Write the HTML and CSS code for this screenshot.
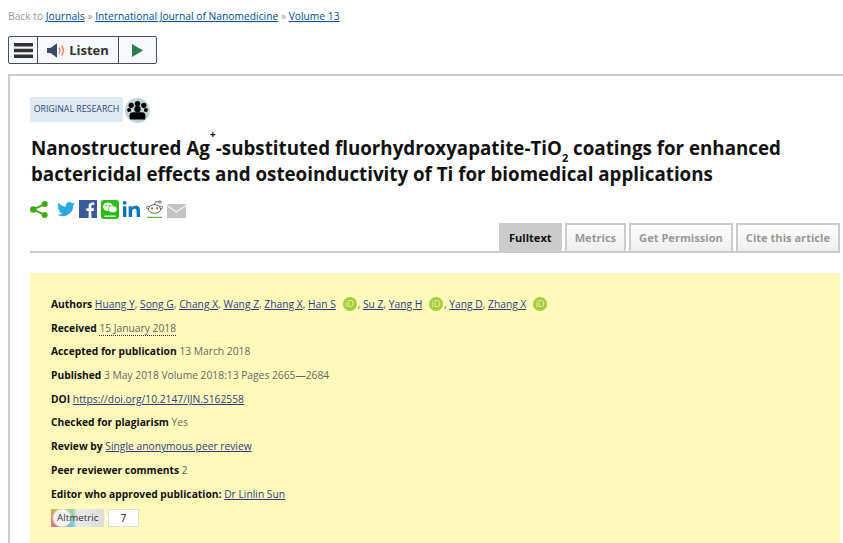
FILE: index.html
```html
<!DOCTYPE html>
<html lang="en">
<head>
<meta charset="utf-8">
<title>Nanostructured Ag+-substituted fluorhydroxyapatite-TiO2 coatings</title>
<link rel="stylesheet" href="styles.css">
</head>
<body>
<nav class="crumbs">Back to <a href="#">Journals</a> » <a href="#">International Journal of Nanomedicine</a> » <a href="#">Volume 13</a></nav>
<div class="player">
  <span class="pl-cell pl-menu"><svg width="19" height="15" viewBox="0 0 19 15"><path fill="#333" d="M0 0h19v3.600H0zM0 5.700h19v3.600H0zM0 11.400h19V15H0z"/></svg></span>
  <span class="pl-cell pl-listen"><svg width="18" height="15" viewBox="0 0 18 15"><path fill="#3c4a6b" d="M0 5h3.500L10 .3v14.400L3.500 10H0z"/><path fill="none" stroke="#e8734e" stroke-width="1.200" d="M12 4.500c1.300 1.800 1.300 4.200 0 6M14.500 2.500c2.300 3 2.300 7 0 10"/></svg><b>Listen</b></span>
  <span class="pl-cell pl-play"><svg width="12" height="13" viewBox="0 0 12 13"><path fill="#2a7d4f" d="M0 0l11 6.500L0 13z"/></svg></span>
</div>
<main class="article">
  <div class="tag-row">
    <span class="tag">ORIGINAL RESEARCH</span>
    <span class="peer"><svg width="21" height="19" viewBox="0 0 20 18"><g fill="#000"><circle cx="4" cy="4" r="2.500"/><circle cx="10" cy="2.600" r="2.600"/><circle cx="16" cy="4" r="2.500"/><circle cx="10" cy="7.700" r="3"/><circle cx="2" cy="8.500" r="1.900"/><circle cx="18" cy="8.500" r="1.900"/><path d="M3 17.500c-1.500-3.500-.5-7 3-6.800h8c3.500-.2 4.500 3.300 3 6.800z"/></g></svg></span>
  </div>
  <h1>Nanostructured Ag<sup>+</sup>-substituted fluorhydroxyapatite-TiO<sub>2</sub> coatings for enhanced bactericidal effects and osteoinductivity of Ti for biomedical applications</h1>
  <div class="share">
    <svg class="i-share" width="18" height="17" viewBox="0 0 19 18"><g fill="#3fa90e"><circle cx="15.500" cy="3.200" r="3.200"/><circle cx="3.500" cy="9" r="3.500"/><circle cx="15.500" cy="14.800" r="3.200"/></g><path stroke="#3fa90e" stroke-width="2" d="M15 3.500L3.500 9l11.500 5.500" fill="none"/></svg>
    <svg class="i-tw" width="18" height="15" viewBox="0 0 24 20"><path fill="#2aa9e0" d="M24 2.400c-.9.400-1.800.7-2.800.8 1-.6 1.800-1.600 2.200-2.700-1 .6-2 1-3.100 1.200A4.900 4.900 0 0 0 11.900 6.200C7.800 6 4.200 4 1.700.9c-1.300 2.200-.6 5.100 1.500 6.500-.8 0-1.600-.2-2.200-.6 0 2.300 1.600 4.400 3.900 4.900-.7.200-1.500.2-2.200.1.600 2 2.400 3.400 4.600 3.400A9.900 9.900 0 0 1 0 16.700 14 14 0 0 0 21.500 4.300c1-.7 1.800-1 2.500-1.900z"/></svg>
    <svg class="i-fb" width="18" height="18" viewBox="0 0 18 18"><rect width="18" height="18" fill="#3b5998"/><path fill="#fff" d="M12.400 18v-7h2.300l.4-2.800h-2.700V6.500c0-.8.300-1.400 1.400-1.400h1.400V2.600c-.3 0-1.100-.1-2.100-.1-2.100 0-3.500 1.300-3.500 3.600v2.100H7.300V11h2.300v7z"/></svg>
    <svg class="i-wc" width="18" height="19" viewBox="0 0 18 19"><rect width="18" height="19" rx="3" fill="#2dbb14"/><ellipse cx="7" cy="6.800" rx="5" ry="4.200" fill="#fff"/><ellipse cx="11.800" cy="9.200" rx="4.200" ry="3.400" fill="#fff" stroke="#2dbb14" stroke-width=".7"/><circle cx="5" cy="5.500" r=".8" fill="#2dbb14"/><circle cx="8.500" cy="5.500" r=".8" fill="#2dbb14"/><path fill="#e6f6e0" d="M3.500 15.500h11v1.500h-11z"/></svg>
    <svg class="i-in" width="18" height="18" viewBox="0 0 19 17"><path fill="#0a74b8" d="M0 5.500h3.600V17H0zM1.800 0a2 2 0 1 1 0 4 2 2 0 0 1 0-4zM6 5.500h3.400v1.600c.6-1 1.900-1.900 3.700-1.900 3.700 0 4.900 2.200 4.900 5.400V17h-3.600v-5.500c0-1.500-.3-3.200-2.200-3.200s-2.600 1.500-2.600 3.100V17H6z"/></svg>
    <svg class="i-rd" width="17" height="18" viewBox="0 0 17 18"><ellipse cx="8.500" cy="9" rx="6.200" ry="4.300" fill="#fff" stroke="#333" stroke-width=".8"/><circle cx="6" cy="8.300" r="1.100" fill="#e8501e"/><circle cx="11" cy="8.300" r="1.100" fill="#e8501e"/><circle cx="1.700" cy="7.500" r="1.300" fill="#fff" stroke="#333" stroke-width=".7"/><circle cx="15.300" cy="7.500" r="1.300" fill="#fff" stroke="#333" stroke-width=".7"/><circle cx="14" cy="2" r="1.200" fill="#fff" stroke="#333" stroke-width=".7"/><path fill="none" stroke="#333" stroke-width=".7" d="M8.500 5l1-3.500 3.400.5"/><path fill="#3fa90e" d="M1 16.800h15v1H1z"/></svg>
    <svg class="i-ml" width="19" height="14" viewBox="0 0 19 14"><rect width="19" height="14" fill="#c4c4c4"/><path fill="none" stroke="#f2f2f2" stroke-width="1.300" d="M0 1.500l9.500 6.500 9.500-6.500"/></svg>
  </div>
  <div class="tabs">
    <a class="tab tab-on" href="#">Fulltext</a>
    <a class="tab" href="#">Metrics</a>
    <a class="tab" href="#">Get Permission</a>
    <a class="tab" href="#">Cite this article</a>
  </div>
  <section class="meta">
    <p><b>Authors</b> <a href="#">Huang Y</a>, <a href="#">Song G</a>, <a href="#">Chang X</a>, <a href="#">Wang Z</a>, <a href="#">Zhang X</a>, <a href="#">Han S</a> <i class="orcid">iD</i>, <a href="#">Su Z</a>, <a href="#">Yang H</a> <i class="orcid">iD</i>, <a href="#">Yang D</a>, <a href="#">Zhang X</a> <i class="orcid">iD</i></p>
    <p><b>Received</b> <span class="dotted">15 January 2018</span></p>
    <p><b>Accepted for publication</b> 13 March 2018</p>
    <p><b>Published</b> 3 May 2018 Volume 2018:13 Pages 2665—2684</p>
    <p><b>DOI</b> <a href="#">https://doi.org/10.2147/IJN.S162558</a></p>
    <p><b>Checked for plagiarism</b> Yes</p>
    <p><b>Review by</b> <a href="#">Single anonymous peer review</a></p>
    <p><b>Peer reviewer comments</b> 2</p>
    <p><b>Editor who approved publication:</b> <a href="#">Dr Linlin Sun</a></p>
    <div class="alt">
      <span class="alt-name">Altmetric</span>
      <span class="alt-num">7</span>
    </div>
  </section>
</main>
</body>
</html>
```
FILE: styles.css
```css
html, body {
  margin: 0;
  height: 543px;
  overflow: hidden;
  background: #fff;
}
body {
  padding: 8px 0 0 8px;
  box-sizing: border-box;
  font-family: "Open Sans", sans-serif;
  font-size: 10.280px;
  color: #666;
}
a { color: #2b3f7e; }
.crumbs {
  height: 16px;
  line-height: 16px;
  color: #999;
}
.crumbs a { color: #004b91; }
.player {
  display: inline-flex;
  height: 28px;
  margin-top: 12px;
  border: 1px solid #4a5058;
  border-radius: 2px;
  box-sizing: border-box;
  background: #f6f8fb;
  vertical-align: top;
}
.pl-cell {
  display: flex;
  align-items: center;
  justify-content: center;
  height: 100%;
}
.pl-menu { width: 28px; border-right: 1px solid #4a5058; }
.pl-listen { width: 80px; gap: 4px; border-right: 1px solid #4a5058; font-size: 13px; color: #333; }
.pl-play { width: 37px; }
.article {
  margin-top: 10px;
  border-top: 2px solid #ccc;
  border-left: 2px solid #ccc;
  padding: 21px 3px 0 20px;
  height: 469px;
  box-sizing: border-box;
}
.tag-row {
  display: flex;
  align-items: flex-start;
  gap: 2px;
}
.tag {
  width: 93px;
  height: 25px;
  line-height: 25px;
  text-align: center;
  background: #e0e9f3;
  color: #2c4a78;
  font-size: 8.800px;
}
.peer {
  display: flex;
  align-items: center;
  justify-content: center;
  width: 25px;
  height: 25px;
  margin-top: 1px;
  border-radius: 50%;
  background: #c0d4d4;
}
h1 {
  margin: 12px 0 0 1px;
  font-size: 18.750px;
  line-height: 26px;
  font-weight: 700;
  color: #111;
}
h1 sup, h1 sub { line-height: 0; }
h1 sup { font-size: 10.500px; vertical-align: baseline; position: relative; top: -17px; }
h1 sub { font-size: 11px; vertical-align: baseline; position: relative; top: 7px; }
.share {
  display: flex;
  align-items: center;
  gap: 4px;
  height: 18px;
  margin-top: 13px;
}
.i-share { margin-right: 5px; }
.i-rd { margin-left: 1px; }
.i-ml { margin-top: 4px; }
.tabs {
  display: flex;
  justify-content: flex-end;
  gap: 3px;
  height: 28px;
  margin-top: 5px;
  border-bottom: 2px solid #ccc;
}
.tab {
  display: flex;
  align-items: center;
  padding: 0 8px 1px;
  height: 25px;
  border: 2px solid #ccc;
  border-bottom: 0;
  background: linear-gradient(#fff, #eee);
  color: #999;
  font-size: 11.100px;
  font-weight: 700;
  text-decoration: none;
}
.tab-on {
  background: #ccc;
  color: #111;
}
.meta {
  margin-top: 20px;
  padding: 20px 21px 0;
  height: 250px;
  background: #fffabb;
  color: #666;
}
.meta p {
  margin: 0;
  height: 23.700px;
  line-height: 23.700px;
}
.meta b { color: #111; }
.dotted { border-bottom: 1px dotted #333; }
.orcid {
  display: inline-block;
  width: 14px;
  height: 14px;
  margin: 0 1px 0 4px;
  border-radius: 50%;
  background: #a6ce39;
  color: #e8f3c0;
  font-style: normal;
  font-size: 9.500px;
  line-height: 14px;
  text-align: center;
  vertical-align: 1px;
}
.alt {
  display: flex;
  align-items: center;
  gap: 4px;
  margin-top: 3px;
  height: 18px;
}
.alt-name {
  width: 53px;
  height: 18px;
  line-height: 18px;
  box-sizing: border-box;
  padding-left: 6px;
  background:
    radial-gradient(circle at 11px 9px, #f4f4f4 8px, transparent 10px),
    linear-gradient(90deg, transparent 22px, #ececec 26px, #dcdcdc 100%),
    conic-gradient(from 0deg at 12px 9px, #b8d46c, #80c8dc 35%, #c070b0 55%, #e09060 75%, #b8d46c);
  color: #333;
  font-size: 9.800px;
}
.alt-num {
  position: relative;
  width: 31px;
  height: 18px;
  line-height: 16px;
  box-sizing: border-box;
  border: 1px solid #ddd;
  background: #fff;
  color: #111;
  text-align: center;
}
.alt-num::before {
  content: "";
  position: absolute;
  left: -4px;
  top: 5px;
  border-top: 3px solid transparent;
  border-bottom: 3px solid transparent;
  border-right: 3px solid #fff;
}
```
